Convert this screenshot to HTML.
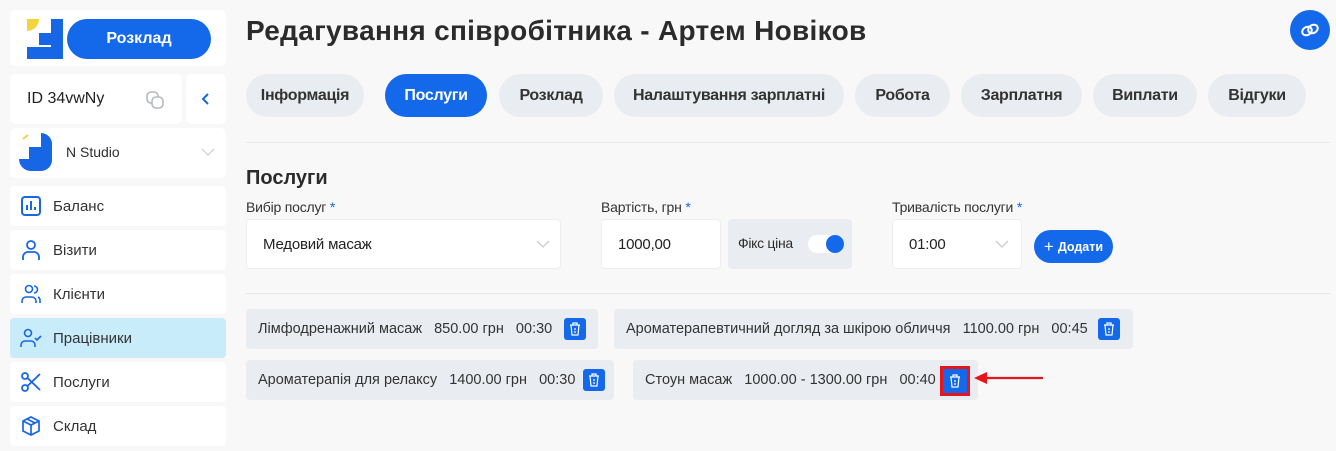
<!DOCTYPE html>
<html><head><meta charset="utf-8"><style>
*{box-sizing:border-box;margin:0;padding:0}
body{width:1336px;height:451px;background:#f8f8f9;font-family:"Liberation Sans",sans-serif;color:#2d2d2d;position:relative;overflow:hidden}
.a{position:absolute}
.card{position:absolute;background:#fff;border-radius:6px}
.mi{position:absolute;left:10px;width:216px;height:40px;background:#fff;border-radius:4px;font-size:15px;display:flex;align-items:center;padding-left:43px;color:#333}
.mi svg{position:absolute;left:10px;top:9px}
.tab{position:absolute;top:74px;height:43px;border-radius:22px;background:#e9ecf1;font-size:16px;font-weight:bold;display:flex;align-items:center;justify-content:center;color:#333;letter-spacing:-0.3px}
.lbl{position:absolute;top:199px;font-size:14px;color:#333;letter-spacing:-0.2px}
.lbl b{color:#1766e6;font-weight:normal}
.inp{position:absolute;top:219px;height:50px;background:#fff;border:1px solid #eceef1;border-radius:4px;font-size:15px;display:flex;align-items:center;padding-left:16px;color:#222;letter-spacing:-0.2px}
.chip{position:absolute;height:40px;background:#e9ecf1;border-radius:4px;font-size:14.5px;display:flex;align-items:center;padding-left:12px;color:#333;letter-spacing:0;white-space:pre}
.tr{position:absolute;width:22px;height:22px;background:#1468ea;border-radius:3px;top:9px}
.tr svg{position:absolute;left:5px;top:4px}
</style></head><body>
<div class="card" style="left:10px;top:10px;width:216px;height:56px">
 <svg class="a" style="left:17px;top:9px" width="36" height="40" viewBox="0 0 36 40"><path d="M0 0h12a12 12 0 0 1-12 12z" fill="#f5d33a"/><rect x="24" y="0" width="12" height="40" fill="#1766e6"/><rect x="12" y="14" width="12" height="12" fill="#1766e6"/><rect x="0" y="28" width="24" height="12" fill="#1766e6"/></svg>
 <div class="a" style="left:57px;top:9px;width:144px;height:40px;border-radius:20px;background:#1468ea;color:#fff;font-weight:bold;font-size:16px;display:flex;align-items:center;justify-content:center">Розклад</div>
</div>
<div class="card" style="left:10px;top:74px;width:172px;height:50px;font-size:16px;padding:16px 0 0 17px;color:#222">ID 34vwNy
 <svg class="a" style="left:135px;top:16px" width="20" height="20" viewBox="0 0 20 20" fill="none" stroke="#b5b8bd" stroke-width="1.6"><rect x="2" y="2" width="11" height="11" rx="4"/><rect x="7" y="7" width="11" height="11" rx="4" fill="#fff"/></svg></div>
<div class="card" style="left:186px;top:74px;width:40px;height:50px"><svg class="a" style="left:15px;top:18px" width="10" height="14" viewBox="0 0 10 14"><path d="M7 2L2 7l5 5" stroke="#1766e6" stroke-width="2" fill="none"/></svg></div>
<div class="card" style="left:10px;top:128px;width:216px;height:50px">
 <svg class="a" style="left:9px;top:5px" width="34" height="38" viewBox="0 0 34 38"><path d="M4 6l5-4" stroke="#f5d33a" stroke-width="2"/><rect x="22" y="0" width="1" height="1" fill="none"/><path d="M22 0a11 11 0 0 1 11 11v16a11 11 0 0 1-11 11H12V26H22z" fill="#1766e6"/><rect x="10" y="14" width="13" height="13" fill="#1766e6"/><path d="M0 26h12v12A12 12 0 0 1 0 26z" fill="#1766e6"/></svg>
 <div class="a" style="left:56px;top:16px;font-size:14px">N Studio</div>
 <svg class="a" style="left:191px;top:20px" width="14" height="9" viewBox="0 0 14 9"><path d="M1 1l6 6 6-6" stroke="#cfd3d8" stroke-width="1.3" fill="none"/></svg>
</div>
<div class="mi" style="top:186px"><svg width="22" height="22" viewBox="0 0 22 22" fill="none" stroke="#1766e6" stroke-width="2"><rect x="2" y="2" width="18" height="18" rx="3"/><path d="M7 15V10M11 15V6M15 15v-3"/></svg>Баланс</div>
<div class="mi" style="top:230px"><svg width="22" height="22" viewBox="0 0 22 22" fill="none" stroke="#1766e6" stroke-width="1.8"><circle cx="11" cy="6" r="4"/><path d="M3 21v-3a5 5 0 0 1 5-5h6a5 5 0 0 1 5 5v3"/></svg>Візити</div>
<div class="mi" style="top:274px"><svg width="22" height="22" viewBox="0 0 22 22" fill="none" stroke="#1766e6" stroke-width="1.6"><circle cx="9" cy="6" r="3.5"/><path d="M2 20v-2a4 4 0 0 1 4-4h6a4 4 0 0 1 4 4v2M14 3a3.5 3.5 0 0 1 0 7M18 14a4 4 0 0 1 2 4v2"/></svg>Клієнти</div>
<div class="mi" style="top:318px;background:#c9ecfb"><svg width="22" height="22" viewBox="0 0 22 22" fill="none" stroke="#1766e6" stroke-width="1.6"><circle cx="8" cy="6" r="3.5"/><path d="M1 20v-2a4 4 0 0 1 4-4h6a4 4 0 0 1 4 4v2M15 11l2 2 4-4"/></svg>Працівники</div>
<div class="mi" style="top:362px"><svg width="22" height="22" viewBox="0 0 22 22" fill="none" stroke="#1766e6" stroke-width="1.8"><circle cx="5" cy="5" r="3"/><circle cx="5" cy="17" r="3"/><path d="M7.5 7L20 19M7.5 15L20 3"/></svg>Послуги</div>
<div class="mi" style="top:406px"><svg width="22" height="22" viewBox="0 0 22 22" fill="none" stroke="#1766e6" stroke-width="1.7"><path d="M11 2l8 4v10l-8 4-8-4V6zM3 6l8 4 8-4M11 10v10M7 4l8 4"/></svg>Склад</div>
<div class="a" style="left:246px;top:15px;font-size:28px;font-weight:bold;color:#2b2b2b;letter-spacing:0.3px">Редагування співробітника - Артем Новіков</div>
<div class="a" style="left:1290px;top:10px;width:40px;height:40px;border-radius:50%;background:#1468ea"><svg class="a" style="left:9px;top:11px" width="22" height="18" viewBox="0 0 22 18" fill="none" stroke="#fff" stroke-width="2"><ellipse cx="8" cy="10" rx="5" ry="4" transform="rotate(-30 8 10)"/><ellipse cx="14" cy="8" rx="5" ry="4" transform="rotate(-30 14 8)"/></svg></div>
<div class="tab" style="left:246px;width:118px">Інформація</div>
<div class="tab" style="left:385px;width:102px;background:#1468ea;color:#fff">Послуги</div>
<div class="tab" style="left:499px;width:104px">Розклад</div>
<div class="tab" style="left:614px;width:230px">Налаштування зарплатні</div>
<div class="tab" style="left:855px;width:95px">Робота</div>
<div class="tab" style="left:961px;width:121px">Зарплатня</div>
<div class="tab" style="left:1093px;width:104px">Виплати</div>
<div class="tab" style="left:1208px;width:98px">Відгуки</div>
<div class="a" style="left:246px;top:142px;width:1084px;height:1px;background:#e6e8eb"></div>
<div class="a" style="left:246px;top:167px;font-size:20px;font-weight:bold;color:#2b2b2b">Послуги</div>
<div class="lbl" style="left:246px">Вибір послуг <b>*</b></div>
<div class="lbl" style="left:601px">Вартість, грн <b>*</b></div>
<div class="lbl" style="left:892px">Тривалість послуги <b>*</b></div>
<div class="inp" style="left:246px;width:315px">Медовий масаж<svg class="a" style="left:289px;top:20px" width="14" height="9" viewBox="0 0 14 9"><path d="M1 1l6 6 6-6" stroke="#c9cdd3" stroke-width="1.3" fill="none"/></svg></div>
<div class="inp" style="left:601px;width:120px">1000,00</div>
<div class="a" style="left:728px;top:219px;width:124px;height:50px;background:#e9ecf1;border-radius:4px;font-size:14px;padding:16px 0 0 10px;letter-spacing:-0.3px">Фікс ціна<div class="a" style="left:80px;top:16px;width:36px;height:18px;border-radius:9px;background:#fff"><div class="a" style="right:0;top:0;width:18px;height:18px;border-radius:50%;background:#1468ea"></div></div></div>
<div class="inp" style="left:892px;width:130px">01:00<svg class="a" style="left:102px;top:20px" width="14" height="9" viewBox="0 0 14 9"><path d="M1 1l6 6 6-6" stroke="#c9cdd3" stroke-width="1.3" fill="none"/></svg></div>
<div class="a" style="left:1034px;top:230px;width:79px;height:33px;border-radius:17px;background:#1468ea;color:#fff;font-size:12.5px;font-weight:bold;display:flex;align-items:center;justify-content:center"><span style="font-size:17px;margin-right:4px;font-weight:normal">+</span>Додати</div>
<div class="a" style="left:246px;top:293px;width:1084px;height:1px;background:#e6e8eb"></div>
<div class="chip" style="left:246px;top:309px;width:352px">Лімфодренажний масаж   850.00 грн   00:30<div class="tr" style="left:318px"><svg width="12" height="14" viewBox="0 0 12 14" fill="none" stroke="#fff" stroke-width="1.2"><path d="M1 3h10M4 3V1h4v2M2 3l1 10h6l1-10M5 7h2M5 10h2"/></svg></div></div>
<div class="chip" style="left:614px;top:309px;width:519px">Ароматерапевтичний догляд за шкірою обличчя   1100.00 грн   00:45<div class="tr" style="left:484px"><svg width="12" height="14" viewBox="0 0 12 14" fill="none" stroke="#fff" stroke-width="1.2"><path d="M1 3h10M4 3V1h4v2M2 3l1 10h6l1-10M5 7h2M5 10h2"/></svg></div></div>
<div class="chip" style="left:246px;top:360px;width:368px">Ароматерапія для релаксу   1400.00 грн   00:30<div class="tr" style="left:337px"><svg width="12" height="14" viewBox="0 0 12 14" fill="none" stroke="#fff" stroke-width="1.2"><path d="M1 3h10M4 3V1h4v2M2 3l1 10h6l1-10M5 7h2M5 10h2"/></svg></div></div>
<div class="chip" style="left:633px;top:360px;width:345px">Стоун масаж   1000.00 - 1300.00 грн   00:40<div class="a" style="left:307px;top:6px;width:30px;height:30px;border:3px solid #e8141b;background:#1468ea"><svg class="a" style="left:6px;top:5px" width="12" height="14" viewBox="0 0 12 14" fill="none" stroke="#fff" stroke-width="1.2"><path d="M1 3h10M4 3V1h4v2M2 3l1 10h6l1-10M5 7h2M5 10h2"/></svg></div></div>
<svg class="a" style="left:972px;top:371px" width="72" height="14" viewBox="0 0 72 14"><path d="M14 7h57" stroke="#e8141b" stroke-width="2.2"/><path d="M2 7l13-6v12z" fill="#e8141b"/></svg>
</body></html>
